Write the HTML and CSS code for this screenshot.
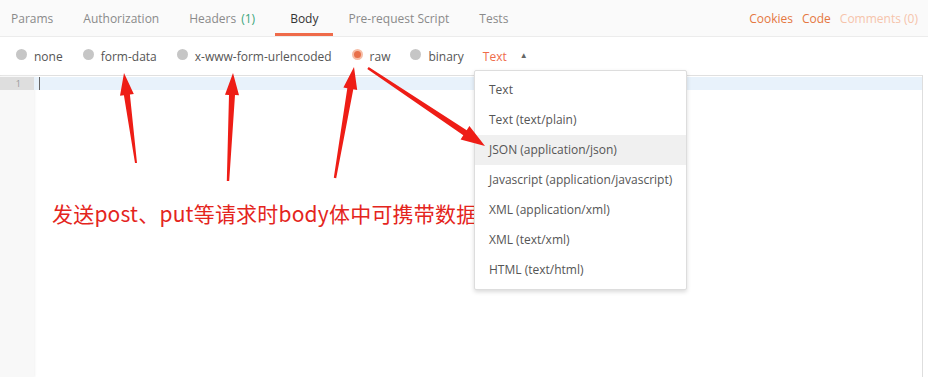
FILE: index.html
```html
<!DOCTYPE html>
<html lang="en">
<head>
    <meta charset="UTF-8">
    <title>Request Body</title>
    <link rel="stylesheet" href="styles.css">
</head>
<body>
    <nav class="tabs">
        <div class="tab">Params</div>
        <div class="tab">Authorization</div>
        <div class="tab">Headers <span class="count">(1)</span></div>
        <div class="tab active">Body</div>
        <div class="tab">Pre-request Script</div>
        <div class="tab">Tests</div>
        <div class="tabs-right">
            <span class="link">Cookies</span>
            <span class="link">Code</span>
            <span class="link faded">Comments (0)</span>
        </div>
    </nav>

    <div class="body-types">
        <label class="radio"><span class="dot"></span>none</label>
        <label class="radio"><span class="dot"></span>form-data</label>
        <label class="radio"><span class="dot"></span>x-www-form-urlencoded</label>
        <label class="radio"><span class="dot checked"></span>raw</label>
        <label class="radio"><span class="dot"></span>binary</label>
        <span class="type-select">Text</span>
        <span class="caret">&#9650;</span>
    </div>

    <div class="editor">
        <div class="gutter">
            <div class="line-no active">1</div>
        </div>
        <div class="code">
            <div class="line active"><span class="cursor"></span></div>
        </div>
    </div>

    <ul class="dropdown">
        <li>Text</li>
        <li>Text (text/plain)</li>
        <li class="hover">JSON (application/json)</li>
        <li>Javascript (application/javascript)</li>
        <li>XML (application/xml)</li>
        <li>XML (text/xml)</li>
        <li>HTML (text/html)</li>
    </ul>

    <div class="note">发送post、put等请求时body体中可携带数据</div>

    <svg class="arrows" width="928" height="377" viewBox="0 0 928 377">
        <polygon points="124,73 133.8,93.9 129.9,94.4 137,162.9 135,163.1 123.9,95.2 120,95.7"/>
        <polygon points="233,73 239,95.3 235,95.1 229.2,181.1 226.8,180.9 229,94.9 225,94.7"/>
        <polygon points="354,67 357.2,89.9 353.3,89.2 336.2,178.2 333.8,177.8 347.3,88.2 343.4,87.5"/>
        <polygon points="485,146 460.6,139.4 463.3,135.2 367.3,69 368.7,67 466.7,130.2 469.4,126.1"/>
    </svg>
</body>
</html>
```

FILE: styles.css
```css
body {
    margin: 0;
    font-family: "Open Sans", Arial, sans-serif;
    font-size: 12px;
    color: #505050;
    background-color: #fff;
    position: relative;
    height: 377px;
    overflow: hidden;
}
.tabs {
    display: flex;
    align-items: stretch;
    height: 37px;
    box-sizing: border-box;
    background-color: #fafafa;
    border-bottom: 1px solid #ececec;
}
.tab {
    display: flex;
    align-items: center;
    padding: 0 15px;
    color: #8a8a8a;
    border-top: 3px solid transparent;
    border-bottom: 3px solid transparent;
}
.tab:first-child {
    padding-left: 11px;
}
.tab.active {
    color: #333;
    border-bottom-color: #ef6b4a;
}
.tab .count {
    color: #3ba67a;
    margin-left: 5px;
    margin-right: 5px;
}
.tabs-right {
    margin-left: auto;
    display: flex;
    align-items: center;
    gap: 9px;
    padding-right: 10px;
}
.link {
    color: #e5773f;
}
.link.faded {
    color: #f6c4ab;
}
.body-types {
    display: flex;
    align-items: center;
    height: 38px;
    padding-left: 16px;
    color: #555;
}
.radio {
    display: flex;
    align-items: center;
    margin-right: 20px;
}
.dot {
    width: 11px;
    height: 11px;
    border-radius: 50%;
    background-color: #c6c6c6;
    margin-right: 7px;
    margin-top: -3px;
    box-sizing: border-box;
}
.dot.checked {
    background-color: #e8704a;
    border: 2px solid #f6bda6;
}
.type-select {
    color: #ef6b4a;
    margin-left: -1px;
}
.caret {
    font-size: 8px;
    color: #666;
    margin-left: 13px;
    margin-top: -3px;
}
.editor {
    display: flex;
    width: 923px;
    height: 302px;
    box-sizing: border-box;
    border-top: 1px solid #e0e0e0;
    border-right: 1px solid #dedede;
}
.gutter {
    width: 34px;
    padding-top: 1px;
    background-color: #f8f8f8;
    box-shadow: 1px 0 2px #f2f2f2;
}
.line-no {
    height: 13px;
    line-height: 13px;
    font-size: 9px;
    text-align: right;
    padding-right: 13px;
    color: #999;
}
.line-no.active {
    background-color: #dedede;
}
.code {
    flex: 1;
    padding-top: 1px;
}
.line {
    height: 13px;
    padding-left: 5px;
}
.line.active {
    background-color: #e8f2fb;
}
.cursor {
    display: inline-block;
    width: 1px;
    height: 13px;
    background-color: #666;
}
.dropdown {
    position: absolute;
    top: 70px;
    left: 474px;
    width: 213px;
    box-sizing: border-box;
    margin: 0;
    padding: 4px 0;
    list-style: none;
    background-color: #fff;
    border: 1px solid #ddd;
    border-radius: 2px;
    box-shadow: 0 2px 4px rgba(0, 0, 0, 0.15);
    z-index: 2;
}
.dropdown li {
    height: 30px;
    line-height: 30px;
    padding-left: 14px;
    color: #555;
    white-space: nowrap;
}
.dropdown li.hover {
    background-color: #f0f0f0;
}
.note {
    position: absolute;
    top: 198px;
    left: 52px;
    font-family: "Noto Sans CJK SC", sans-serif;
    font-size: 21px;
    letter-spacing: 0.2px;
    line-height: 30px;
    color: #e4251d;
    white-space: nowrap;
    z-index: 1;
}
.arrows {
    position: absolute;
    top: 0;
    left: 0;
    z-index: 3;
    fill: #ee1d16;
}
```
